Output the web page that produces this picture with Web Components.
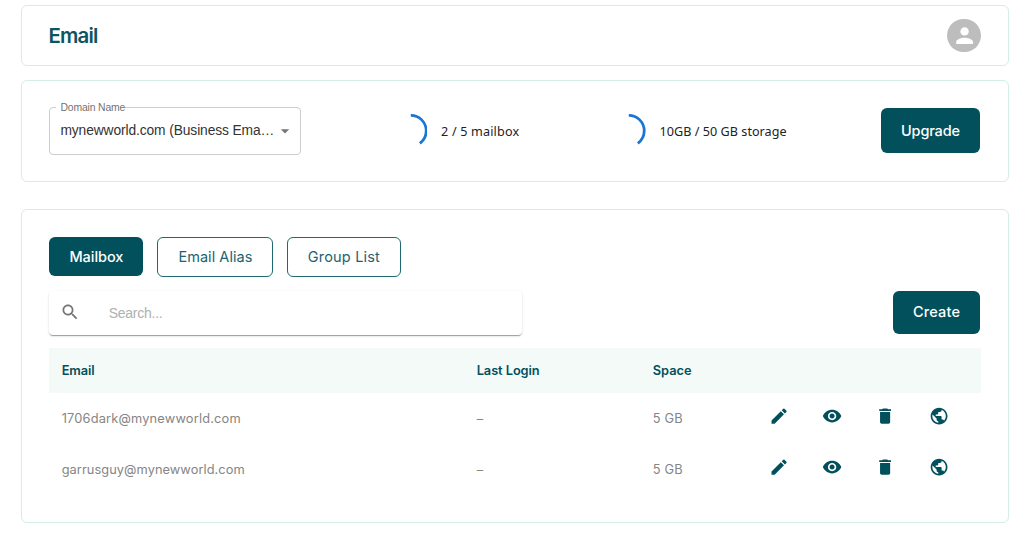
<!DOCTYPE html>
<html lang="en">
<head>
<meta charset="utf-8">
<title>Email</title>
<style>
html,body{margin:0;background:#fff}
body{height:533px;overflow:hidden;font-family:Inter,"Liberation Sans",sans-serif}
</style>
</head>
<body>
<email-page></email-page>
<script>
const define = (name, html, setup) => customElements.define(name, class extends HTMLElement {
  connectedCallback() {
    if (this.shadowRoot) return;
    const t = document.createElement('template');
    t.innerHTML = typeof html === 'function' ? html(this) : html;
    this.attachShadow({mode:'open'}).append(t.content.cloneNode(true));
    if (setup) setup(this);
  }
});

// Text run tracked to fill the width it is given.
define('fit-text', '<style>:host{display:inline-block;white-space:nowrap}span{display:inline-block}</style><span><slot></slot></span>', el => {
  const s = el.shadowRoot.querySelector('span');
  const w = +el.getAttribute('w');
  const extra = (w - s.getBoundingClientRect().width) / Math.max(1, el.textContent.length - 1);
  s.style.letterSpacing = extra.toFixed(3) + 'px';
  el.style.width = w + 'px';
});

const PATHS = {
  edit:'M3 17.25V21h3.75L17.81 9.94l-3.75-3.75L3 17.25zM20.71 7.04c.39-.39.39-1.02 0-1.41l-2.34-2.34a.9959.9959 0 0 0-1.41 0l-1.83 1.83 3.75 3.75 1.83-1.83z',
  view:'M12 4.5C7 4.5 2.73 7.61 1 12c1.73 4.39 6 7.5 11 7.5s9.27-3.11 11-7.5c-1.73-4.39-6-7.5-11-7.5zM12 17c-2.76 0-5-2.24-5-5s2.24-5 5-5 5 2.24 5 5-2.24 5-5 5zm0-8c-1.66 0-3 1.34-3 3s1.34 3 3 3 3-1.34 3-3-1.34-3-3-3z',
  remove:'M6 19c0 1.1.9 2 2 2h8c1.1 0 2-.9 2-2V7H6v12zM19 4h-3.5l-1-1h-5l-1 1H5v2h14V4z',
  web:'M12 2C6.48 2 2 6.48 2 12s4.48 10 10 10 10-4.48 10-10S17.52 2 12 2zm-1 17.93c-3.95-.49-7-3.85-7-7.93 0-.62.08-1.21.21-1.79L9 15v1c0 1.1.9 2 2 2v1.93zm6.9-2.54c-.26-.81-1-1.39-1.9-1.39h-1v-3c0-.55-.45-1-1-1H8v-2h2c.55 0 1-.45 1-1V7h2c1.1 0 2-.9 2-2v-.41c2.93 1.19 5 4.06 5 7.41 0 2.08-.8 3.97-2.1 5.39z',
  search:'M15.5 14h-.79l-.28-.27C15.41 12.59 16 11.11 16 9.5 16 5.91 13.09 3 9.5 3S3 5.91 3 9.5 5.91 16 9.5 16c1.61 0 3.09-.59 4.23-1.57l.27.28v.79l5 4.99L20.49 19l-4.99-5zm-6 0C7.01 14 5 11.99 5 9.5S7.01 5 9.5 5 14 7.01 14 9.5 11.99 14 9.5 14z',
  person:'M12 12c2.21 0 4-1.79 4-4s-1.79-4-4-4-4 1.79-4 4 1.79 4 4 4zm0 2c-2.67 0-8 1.34-8 4v2h16v-2c0-2.66-5.33-4-8-4z',
  down:'M7 10l5 5 5-5z'
};
define('ui-icon', el => `<style>:host{display:block;width:var(--size,20.2px);height:var(--size,20.2px);flex:none}svg{display:block;width:100%;height:100%;fill:currentColor}</style><svg viewBox="0 0 24 24"><path d="${PATHS[el.getAttribute('name')]}"/></svg>`);

define('ui-card', '<style>:host{display:flex;box-sizing:border-box;border:1px solid #d3eee4;border-radius:6px;background:#fff;padding:0 28px 0 27px}</style><slot></slot>');

define('ui-avatar', '<style>:host{display:flex;width:33.6px;height:33.6px;border-radius:50%;background:#bdbdbd;color:#fff;align-items:center;justify-content:center;--size:25.2px}</style><ui-icon name="person"></ui-icon>');

define('ui-button', '<style>:host{display:flex;box-sizing:border-box;align-items:center;justify-content:center;border-radius:6px;background:#02505c;color:#fff;font-size:14.5px;font-weight:500;line-height:20px}:host([outlined]){background:#fff;color:#1d6470;border:1px solid #1f6873;font-weight:400}</style><slot></slot>');

define('usage-ring', '<style>:host{display:flex;align-items:center;gap:14px;font:12.6px/18px "Noto Sans","Open Sans",sans-serif;color:#222}svg{display:block;width:33.6px;height:33.6px}slot{display:block;padding-top:2px}</style><svg viewBox="22 22 44 44"><circle cx="44" cy="44" r="20.2" fill="none" stroke="#1976d2" stroke-width="3.6" pathLength="100" stroke-dasharray="40 100" transform="rotate(-90 44 44)"/></svg><slot></slot>');

define('domain-select', `<style>
:host{display:block;width:252px;height:53px;margin-top:-6px;font-family:"Liberation Sans",Arial,sans-serif}
fieldset{box-sizing:border-box;margin:0;min-width:0;width:252px;height:53px;border:1px solid #cdcdcd;border-radius:4px;padding:0 7px 0 10.4px}
legend{display:block;font-size:10.4px;line-height:12px;color:#737373;padding:0 0 0 4px;margin-left:-4px;width:65px}
div{display:flex;align-items:center;justify-content:space-between;height:33px;color:#333;font-size:13.8px;--size:20px}
ui-icon{color:#757575;margin:1px -2px 0 0}
</style><fieldset><legend><fit-text w="65">Domain Name</fit-text></legend><div><fit-text w="214">mynewworld.com (Business Ema…</fit-text><ui-icon name="down"></ui-icon></div></fieldset>`);

define('search-box', `<style>
:host{display:flex;align-items:center;box-sizing:border-box;width:473px;height:44px;margin-left:-.5px;padding-left:11.5px;border-radius:4px;background:#fff;box-shadow:0 2px 1px -1px rgba(0,0,0,.22),0 1px 1px rgba(0,0,0,.16),0 1px 3px rgba(0,0,0,.1);color:#757575;font:14px/20px "Liberation Sans",Arial,sans-serif}
span{color:#b0b0b0;margin-left:28.5px}
ui-icon{margin-top:-2px}
</style><ui-icon name="search"></ui-icon><span><fit-text w="54">Search...</fit-text></span>`);

define('mail-row', el => `<style>
:host{display:grid;grid-template-columns:415px 176px 127.4px 53.2px 53.2px 53.2px auto;align-items:center;height:51px;padding-left:12.7px;color:#858585;font-size:12.8px;line-height:18px}
fit-text{padding-top:1px}
ui-icon{color:#02505c;margin:-4px 0 0 -11px}
</style><fit-text w="${el.getAttribute('w')}">${el.getAttribute('address')}</fit-text><fit-text w="7">–</fit-text><fit-text w="30">5 GB</fit-text>
<ui-icon name="edit"></ui-icon><ui-icon name="view"></ui-icon><ui-icon name="remove"></ui-icon><ui-icon name="web"></ui-icon>`);

define('mail-table', `<style>
:host{display:block;width:932px}
header{display:grid;grid-template-columns:415px 176px 1fr;align-items:center;height:45px;padding-left:12.7px;background:#f3faf8;color:#02505c;font-size:12.8px;font-weight:600;line-height:18px}
fit-text{padding-top:1px}
</style><header><fit-text w="33">Email</fit-text><fit-text w="63">Last Login</fit-text><fit-text w="39">Space</fit-text></header>
<mail-row address="1706dark@mynewworld.com" w="179"></mail-row>
<mail-row address="garrusguy@mynewworld.com" w="183"></mail-row>`);

define('email-page', `<style>
:host{display:flex;flex-direction:column;box-sizing:border-box;width:1024px;height:533px;padding:5px 15px 0 21px}
.top{height:61px;padding-right:27px;align-items:center;justify-content:space-between}
h1{margin:0 0 0 -.6px;font-size:20.4px;line-height:28px;font-weight:600;color:#0b5563}
.plan{height:102px;margin-top:14px;display:grid;grid-template-columns:344.5px 218.5px 1fr auto;align-items:center}
.main{height:314px;margin-top:27px;flex-direction:column;padding-top:26px}
.tabs{display:flex;align-items:center;gap:14px;height:42px}
.tools{display:flex;align-items:center;justify-content:space-between;height:44px;margin:13px 0 13px}
</style>
<ui-card class="top"><h1><fit-text w="50">Email</fit-text></h1><ui-avatar></ui-avatar></ui-card>
<ui-card class="plan"><domain-select></domain-select>
<usage-ring><fit-text w="78">2 / 5 mailbox</fit-text></usage-ring>
<usage-ring><fit-text w="127">10GB / 50 GB storage</fit-text></usage-ring>
<ui-button style="width:99px;height:45px;margin-top:-1px"><fit-text w="59">Upgrade</fit-text></ui-button></ui-card>
<ui-card class="main">
<div class="tabs"><ui-button style="width:94px;height:39px;margin:-1px 0 0 .4px"><fit-text w="54">Mailbox</fit-text></ui-button><ui-button outlined style="width:116px;height:40px"><fit-text w="74">Email Alias</fit-text></ui-button><ui-button outlined style="width:114px;height:40px;margin-left:-.6px"><fit-text w="72">Group List</fit-text></ui-button></div>
<div class="tools"><search-box></search-box><ui-button style="width:87px;height:43px;margin-top:-2px"><fit-text w="47">Create</fit-text></ui-button></div>
<mail-table></mail-table>
</ui-card>`);
</script>
</body>
</html>
